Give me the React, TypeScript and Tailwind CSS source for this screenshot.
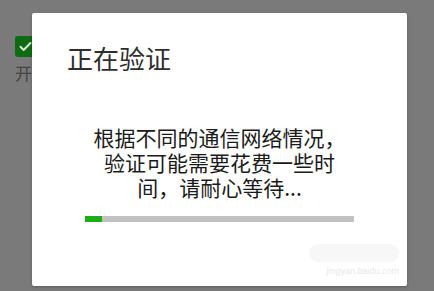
export default function App() {
    const font = { fontFamily: '"Noto Sans CJK SC", "Noto Sans", sans-serif' };

    return (
        <div className="relative h-[291px] w-[434px] overflow-hidden bg-[#7a7a7a]" style={font}>
            {/* Page behind the dialog */}
            <div className="flex flex-col items-start pl-[15px] pt-[36px]">
                <div className="flex h-[21px] w-[21px] items-center justify-center rounded-[3px] bg-[#0e6b12]">
                    <svg width="15" height="15" viewBox="0 0 24 24" fill="none" stroke="#d8e8d8" strokeWidth="3.2" strokeLinecap="round" strokeLinejoin="round">
                        <path d="M4 12.5l5 5L20 6.5" />
                    </svg>
                </div>
                <span className="mt-[6px] text-[17px] leading-[20px] text-[#444]">开启</span>
            </div>

            {/* Dialog */}
            <div className="absolute left-[32px] top-[13px] flex h-[273px] w-[375px] flex-col rounded-[2px] bg-white shadow-[0_1px_3px_rgba(0,0,0,0.25)]">
                <h2 className="pl-[35px] pt-[32px] text-[26px] leading-[26px] font-normal text-[#2e2e2e]">正在验证</h2>

                <div className="mt-[54px] text-center text-[21px] leading-[25px] text-[#1a1a1a]">
                    <p>根据不同的通信网络情况，</p>
                    <p>验证可能需要花费一些时</p>
                    <p>间，请耐心等待...</p>
                </div>

                <div className="mx-[53px] mt-[16px] flex h-[6px] bg-[#c2c2c2]">
                    <div className="w-[17px] bg-[#1aad19]" />
                </div>

                {/* faint watermark */}
                <div className="mt-auto flex justify-end pb-[10px] pr-[8px]">
                    <div className="flex flex-col items-end gap-[4px]">
                        <div className="h-[18px] w-[90px] rounded-full bg-[#f7f7f7]" />
                        <span className="text-[9px] leading-[10px] text-[#e8e8e8]" style={{ fontFamily: '"Liberation Sans", sans-serif' }}>
                            jingyan.baidu.com
                        </span>
                    </div>
                </div>
            </div>
        </div>
    );
}
